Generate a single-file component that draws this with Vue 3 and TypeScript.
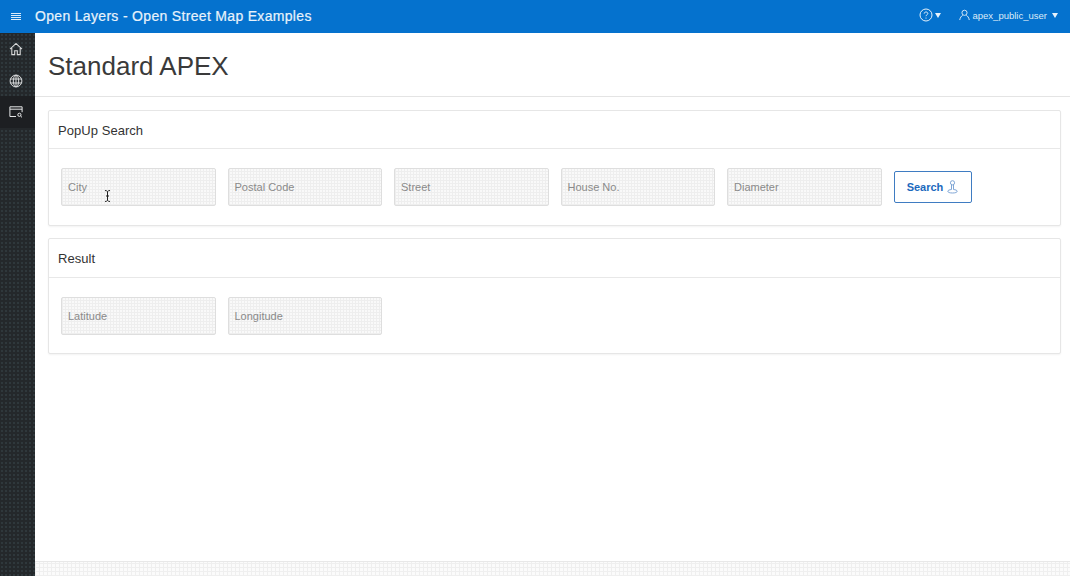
<script setup lang="ts">
const searchFields: string[] = ['City', 'Postal Code', 'Street', 'House No.', 'Diameter']
const resultFields: string[] = ['Latitude', 'Longitude']
</script>

<template>
  <div class="page">
    <header class="topbar">
      <button class="burger" aria-label="Menu">
        <svg width="12" height="10" viewBox="0 0 12 10" fill="none" stroke="#dcebf8" stroke-width="1">
          <path d="M1 1.500h10M1 3.500h10M1 5.500h10M1 7.500h10" />
        </svg>
      </button>
      <div class="app-title">Open Layers - Open Street Map Examples</div>
      <div class="top-actions">
        <span class="help">
          <svg width="14" height="14" viewBox="0 0 14 14" fill="none" stroke="#e6f1fa" stroke-width="1">
            <circle cx="7" cy="7" r="6" />
            <path d="M5.200 5.600c0-1 .8-1.600 1.800-1.600s1.800.6 1.800 1.500c0 1.300-1.800 1.300-1.800 2.700" />
            <path d="M7 9.600v1" />
          </svg>
          <i class="caret"></i>
        </span>
        <span class="user">
          <svg width="11" height="12" viewBox="0 0 12 12" fill="none" stroke="#e6f1fa" stroke-width="1">
            <circle cx="6" cy="3.600" r="2.800" />
            <path d="M.8 11.500c.4-2.800 2-4.600 3.200-5M11.200 11.500c-.4-2.800-2-4.600-3.200-5" />
          </svg>
          <span class="user-name">apex_public_user</span>
          <i class="caret"></i>
        </span>
      </div>
    </header>

    <div class="body">
      <nav class="sidenav">
        <div class="nav-item">
          <svg width="14" height="14" viewBox="0 0 14 14" fill="none" stroke="#d8d9da" stroke-width="1.100">
            <path d="M1 7.200 7 1.400l6 5.800M2.800 6v6.600h2.900V8.800h2.600v3.800h2.900V6" />
          </svg>
        </div>
        <div class="nav-item globe">
          <svg width="14" height="14" viewBox="0 0 14 14" fill="none" stroke="#d8d9da" stroke-width="1">
            <circle cx="7" cy="7" r="5.900" />
            <ellipse cx="7" cy="7" rx="2.700" ry="5.900" />
            <path d="M7 1v12M1.500 5h11M1.500 9h11" />
          </svg>
        </div>
        <div class="nav-item active">
          <svg width="14" height="12" viewBox="0 0 14 12" fill="none" stroke="#e4e5e6" stroke-width="1">
            <path d="M7 10.500H.9V.8h12.200v5.400" />
            <path d="M.9 3.200h12.200" />
            <circle cx="10.400" cy="8.800" r="1.600" />
            <path d="m11.600 10 1.400 1.400" />
          </svg>
        </div>
      </nav>

      <main class="content">
        <div class="title-band">
          <h1>Standard APEX</h1>
        </div>

        <div class="regions">
          <section class="card">
            <h2 class="card-head">PopUp Search</h2>
            <div class="card-body">
              <div v-for="f in searchFields" :key="f" class="field">{{ f }}</div>
              <button class="search-btn">
                Search
                <svg width="11" height="14" viewBox="0 0 11 14" fill="none" stroke="#7fa6d6" stroke-width="1">
                  <circle cx="5.500" cy="2.800" r="2.100" />
                  <path d="M4.500 5v4.500M6.500 5v4.500" />
                  <path d="M4.500 9.500c-2 .2-3.700.8-3.700 1.800 0 1 2 1.700 4.700 1.700s4.700-.7 4.700-1.700c0-1-1.700-1.600-3.700-1.800" />
                </svg>
              </button>
              <svg class="ibeam" width="7" height="12" viewBox="0 0 7 12" fill="none" stroke="#222" stroke-width="1">
                <path d="M1 .5c1 0 2 .4 2.500 1 .5-.6 1.500-1 2.500-1M3.500 1.500v9M1 11.500c1 0 2-.4 2.500-1 .5.6 1.500 1 2.500 1M2 6h3" />
              </svg>
            </div>
          </section>

          <section class="card">
            <h2 class="card-head">Result</h2>
            <div class="card-body">
              <div v-for="f in resultFields" :key="f" class="field">{{ f }}</div>
            </div>
          </section>
        </div>

        <footer class="foot"></footer>
      </main>
    </div>
  </div>
</template>

<style>
html, body { margin: 0; padding: 0; background: #fff; }
</style>

<style scoped>
.page {
  width: 1070px;
  height: 576px;
  overflow: hidden;
  display: flex;
  flex-direction: column;
  font-family: "Liberation Sans", Arial, sans-serif;
  color: #333;
}
.topbar {
  height: 33px;
  flex: none;
  background: #0572ce;
  display: flex;
  align-items: center;
  color: #fff;
}
.burger {
  width: 32px;
  margin-right: 3px;
  height: 31px;
  border: 0;
  padding: 0;
  background: none;
  display: flex;
  align-items: center;
  justify-content: center;
}
.app-title {
  font-size: 14px;
  letter-spacing: 0.32px;
  color: #e8f2fb;
  margin-bottom: 2px;
  -webkit-text-stroke: 0.2px #e8f2fb;
}
.top-actions {
  margin-left: auto;
  display: flex;
  align-items: center;
  padding-right: 12px;
  gap: 18px;
  margin-bottom: 3px;
}
.help, .user {
  display: flex;
  align-items: center;
}
.help { gap: 2px; }
.user { gap: 3px; }
.user-name {
  font-size: 9.5px;
  color: #dcebf8;
  margin-right: 2px;
}
.caret {
  width: 0;
  height: 0;
  border-left: 3.500px solid transparent;
  border-right: 3.500px solid transparent;
  border-top: 5px solid #e8f2fb;
}
.body {
  flex: 1;
  display: flex;
  min-height: 0;
}
.sidenav {
  width: 35px;
  flex: none;
  box-sizing: border-box;
  background:
    radial-gradient(circle at 2px 2px, #2f383c 0.9px, transparent 1.2px) 0 0 / 4px 4px,
    #24282b;
  display: flex;
  flex-direction: column;
}
.nav-item {
  height: 31.5px;
  padding-right: 3px;
  box-sizing: border-box;
  display: flex;
  align-items: center;
  justify-content: center;
}
.nav-item.globe { padding-top: 1px; }
.nav-item.active { height: 32px; background: #1d1f22; }
.content {
  flex: 1;
  min-width: 0;
  display: flex;
  flex-direction: column;
}
.title-band {
  height: 64px;
  flex: none;
  box-sizing: border-box;
  border-bottom: 1px solid #e4e4e4;
  padding-left: 13px;
  padding-top: 4px;
  display: flex;
  align-items: center;
}
h1 {
  margin: 0;
  font-size: 26px;
  font-weight: 400;
  color: #3a3a3a;
}
.regions {
  flex: 1;
  padding: 13px 9px 0 13px;
  display: flex;
  flex-direction: column;
  gap: 12px;
}
.card {
  border: 1px solid #e6e6e6;
  border-radius: 2px;
  box-shadow: 0 1px 2px rgba(0, 0, 0, 0.05);
  background: #fff;
}
.card-head {
  margin: 0;
  height: 38px;
  box-sizing: border-box;
  padding-left: 9px;
  border-bottom: 1px solid #e8e8e8;
  font-size: 13px;
  font-weight: 400;
  letter-spacing: 0.05px;
  line-height: 39px;
  color: #333;
}
.card-body {
  position: relative;
  height: 76px;
  box-sizing: border-box;
  padding: 19px 12px 0;
  display: flex;
  align-items: flex-start;
  gap: 12px;
}
.card + .card .card-head { height: 39px; }
.card + .card .card-body { height: 75px; }
.field {
  width: 154.500px;
  height: 38px;
  box-sizing: border-box;
  border: 1px solid #dedede;
  border-radius: 2px;
  background:
    repeating-linear-gradient(0deg, #eeeeee 0 1px, transparent 1px 3px),
    repeating-linear-gradient(90deg, #eeeeee 0 1px, #f9f9f9 1px 3px);
  padding-left: 6px;
  font-size: 11px;
  line-height: 37px;
  color: #8a8a8a;
}
.search-btn {
  width: 78px;
  height: 32px;
  margin-top: 3px;
  box-sizing: border-box;
  border: 1px solid #3f7cc2;
  border-radius: 2px;
  background: #fff;
  display: flex;
  align-items: center;
  justify-content: center;
  gap: 4px;
  font-family: inherit;
  font-size: 11px;
  font-weight: 700;
  color: #1c69bd;
  padding: 0;
}
.ibeam {
  position: absolute;
  left: 55px;
  top: 41px;
}
.foot {
  height: 15px;
  flex: none;
  border-top: 1px solid #e8e8e8;
  box-sizing: border-box;
  background:
    repeating-linear-gradient(0deg, #efefef 0 1px, transparent 1px 4px),
    repeating-linear-gradient(90deg, #efefef 0 1px, #fbfbfb 1px 4px);
}
</style>
